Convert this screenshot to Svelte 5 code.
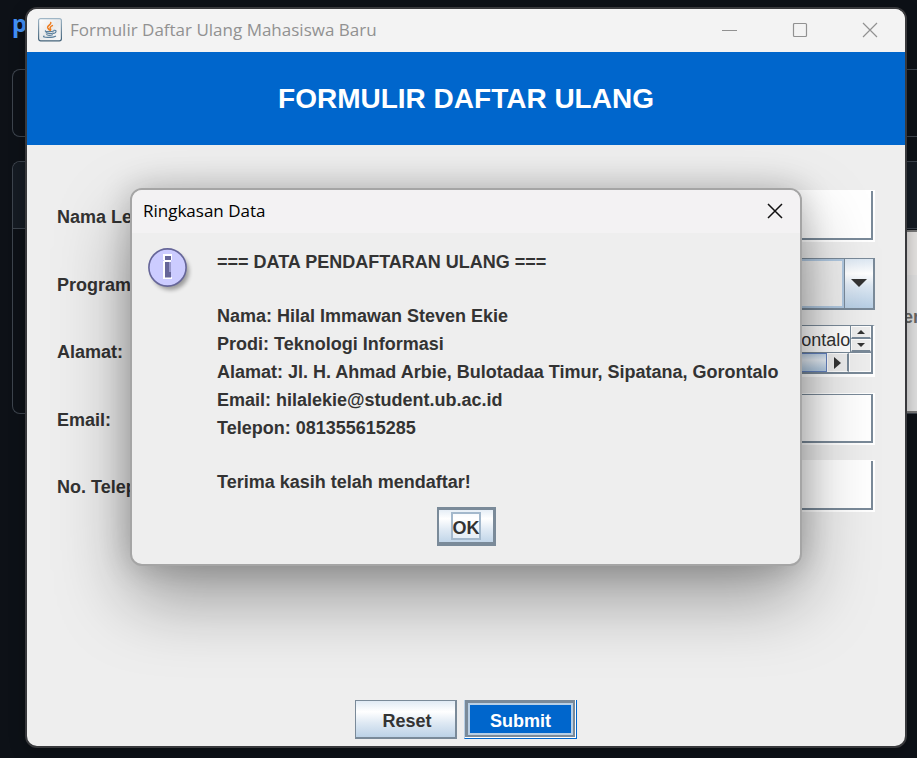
<script>
  import { onMount } from 'svelte';

  let nama = $state('Hilal Immawan Steven Ekie');
  let prodi = $state('Teknologi Informasi');
  let alamat = $state('Jl. H. Ahmad Arbie, Bulotadaa Timur, Sipatana, Gorontalo');
  let email = $state('hilalekie@student.ub.ac.id');
  let telepon = $state('081355615285');
  let area;

  onMount(() => {
    area.scrollLeft = area.scrollWidth;
  });
</script>

<div class="desktop">
  <div class="page" aria-hidden="true">
    <div class="brand">p</div>
    <div class="card"></div>
    <div class="panel"><div class="panel-head"><span></span></div></div>
  </div>

  <div class="side" aria-hidden="true"><div class="side-head"></div><p>er</p></div>

  <main class="window">
    <div class="titlebar">
      <svg class="java" viewBox="0 0 24 24" width="24" height="24" aria-hidden="true">
        <defs>
          <linearGradient id="jb" x1="0" y1="0" x2="0" y2="1">
            <stop offset="0" stop-color="#9fb6c6" /><stop offset="1" stop-color="#44637a" />
          </linearGradient>
          <linearGradient id="jf" x1="0" y1="0" x2="1" y2="1">
            <stop offset="0" stop-color="#ffffff" /><stop offset=".5" stop-color="#e9eaeb" /><stop offset="1" stop-color="#fafafa" />
          </linearGradient>
        </defs>
        <rect x=".6" y=".6" width="22.8" height="22.2" rx="2" fill="url(#jf)" stroke="url(#jb)" stroke-width="1.2" />
        <g fill="none" stroke-linecap="round">
          <path d="M12.800 4.500c.6 2.200-3.500 2.800-3.200 4.900.2 1.200 1.600 1.700 1.700 2.600M14.400 7.600c-1.600.7-2.600 1.400-2.100 2.600.4.900.7 1.300.1 2" stroke="#ef7d1f" stroke-width="1.500" />
          <path d="M7.500 12.800c-1.500.9 6 1.200 8.200.1M8.100 14.800c1.500 1 5.300.9 7 .1M8.700 16.600c1.300.8 4.300.8 5.800.1M16 12.400c2.900-.7 2.700 2.300-.2 3.100M6 18.100c-3 1.500 8.800 1.900 11.600.1" stroke="#5a7f9c" stroke-width="1.100" />
        </g>
      </svg>
      <span class="caption">Formulir Daftar Ulang Mahasiswa Baru</span>
      <div class="controls">
        <button type="button" aria-label="Minimize">
          <svg width="16" height="16" viewBox="0 0 16 16"><path d="M0 8.500h15" /></svg>
        </button>
        <button type="button" aria-label="Maximize">
          <svg width="16" height="16" viewBox="0 0 16 16"><rect x="1.500" y="1.500" width="13" height="13" rx="1" /></svg>
        </button>
        <button type="button" aria-label="Close">
          <svg width="16" height="16" viewBox="0 0 16 16"><path d="M1 1l14 14M15 1L1 15" /></svg>
        </button>
      </div>
    </div>

    <header><h1>FORMULIR DAFTAR ULANG</h1></header>

    <form onsubmit={(e) => e.preventDefault()}>
      <div class="fields">
        <label for="nama">Nama Lengkap:</label>
        <input id="nama" class="box open" type="text" bind:value={nama} />

        <label for="prodi">Program Studi:</label>
        <div class="combo">
          <select id="prodi" bind:value={prodi}>
            <option>Teknologi Informasi</option>
          </select>
          <span class="drop" aria-hidden="true">
            <svg width="16" height="8" viewBox="0 0 16 8"><path d="M0 0h16L8 8z" /></svg>
          </span>
        </div>

        <label for="alamat">Alamat:</label>
        <div class="scroll">
          <div class="upper">
            <textarea id="alamat" rows="1" wrap="off" bind:this={area} bind:value={alamat}></textarea>
            <div class="vbar">
              <button type="button" aria-label="Up"><svg width="8" height="4" viewBox="0 0 8 4"><path d="M0 4h8L4 0z" /></svg></button>
              <button type="button" aria-label="Down"><svg width="8" height="4" viewBox="0 0 8 4"><path d="M0 0h8L4 4z" /></svg></button>
            </div>
          </div>
          <div class="hbar">
            <div class="thumb"></div>
            <button type="button" aria-label="Right"><svg width="7" height="12" viewBox="0 0 7 12"><path d="M0 0v12l7-6z" /></svg></button>
            <div class="corner"></div>
          </div>
        </div>

        <label for="email">Email:</label>
        <input id="email" class="box" type="text" bind:value={email} />

        <label for="telepon">No. Telepon:</label>
        <input id="telepon" class="box open" type="text" bind:value={telepon} />
      </div>

      <div class="actions">
        <button type="reset" class="metal reset">Reset</button>
        <button type="submit" class="submit">Submit</button>
      </div>
    </form>
  </main>

  <div class="dialog" role="dialog" aria-labelledby="dlg-title">
    <div class="dlg-bar">
      <span id="dlg-title">Ringkasan Data</span>
      <button type="button" aria-label="Close">
        <svg width="16" height="16" viewBox="0 0 16 16"><path d="M1 1l14 14M15 1L1 15" /></svg>
      </button>
    </div>
    <div class="dlg-body">
      <svg class="info" width="46" height="48" viewBox="0 0 46 48" aria-hidden="true">
        <defs><filter id="soft"><feGaussianBlur stdDeviation="2" /></filter></defs>
        <circle cx="22.500" cy="23.500" r="18.500" fill="#000" opacity=".35" filter="url(#soft)" />
        <circle cx="19.500" cy="19.500" r="18.600" fill="#ccccff" stroke="#666699" stroke-width="1.600" />
        <path d="M15 6h9v6h-1v17h1v2h-9V13h1v-1h-1z" fill="#fff" />
        <path d="M17 8h6v4h-6zM17 14h6v15.500h-6z" fill="#666699" />
        <path d="M21 14h2v10h-2z" fill="#9999cc" />
      </svg>
      <div class="message">
        <p>=== DATA PENDAFTARAN ULANG ===</p>
        <p class="gap">Nama: {nama}</p>
        <p>Prodi: {prodi}</p>
        <p>Alamat: {alamat}</p>
        <p>Email: {email}</p>
        <p>Telepon: {telepon}</p>
        <p class="gap">Terima kasih telah mendaftar!</p>
      </div>
    </div>
    <div class="dlg-foot">
      <button type="button" class="metal ok"><span>OK</span></button>
    </div>
  </div>
</div>

<style>
  :global(body) { background: #0d1117; }
  .desktop {
    position: relative;
    height: 100vh;
    min-height: 600px;
    overflow: hidden;
    background: #0d1117;
    font: 18px/28px "Liberation Sans", Arial, sans-serif;
    color: #333;
  }
  .desktop * { box-sizing: border-box; }
  button, input, select, textarea { font: inherit; color: inherit; margin: 0; padding: 0; border: 0; border-radius: 0; }
  button { background: none; }
  p, h1 { margin: 0; }

  .page { padding: 8px 0 0 12px; }
  .brand { height: 61px; font: bold 24px/30px "Noto Sans", sans-serif; color: #4493f8; }
  .card { height: 68px; border: 1px solid #3d444d; border-right: 0; border-radius: 8px 0 0 8px; }
  .panel { height: 253px; margin-top: 24px; border: 1px solid #3d444d; border-right: 0; border-radius: 8px 0 0 8px; overflow: hidden; }
  .panel-head { height: 67px; padding: 28px 12px; background: #151b23; border-bottom: 1px solid #3d444d; }
  .panel-head span { display: block; width: 12px; height: 12px; border: 2px solid #4a5a6a; border-radius: 50%; }

  .side {
    position: absolute;
    top: 230px;
    right: 0;
    width: 14px;
    height: 183px;
    background: #dedede;
    border-top: 2px solid #777;
    border-bottom: 2px solid #777;
  }
  .side-head { height: 43px; background: #e4e2e0; }
  .side p { margin-top: 28px; font-weight: bold; color: #666; }

  .window {
    position: absolute;
    top: 7px;
    left: 25px;
    right: 10px;
    bottom: 10px;
    display: flex;
    flex-direction: column;
    border: 2px solid #38393c;
    border-radius: 12px;
    background: #eee;
    overflow: hidden;
    box-shadow: 0 4px 16px #0004;
  }
  .titlebar { display: flex; align-items: center; height: 43px; flex: none; padding: 0 0 2px 11px; background: #f3f3f3; color: #919191; }
  .caption { margin-left: 8px; font: 17px/24px "Open Sans", "Noto Sans", sans-serif; }
  .controls { display: flex; margin-left: auto; }
  .controls button { display: grid; place-items: center; width: 70px; height: 40px; }
  .controls svg { fill: none; stroke: #919191; stroke-width: 1.2; }

  header { height: 93px; flex: none; display: grid; place-items: center; background: #0066cc; }
  h1 { font-size: 28px; line-height: 32px; color: #fff; }

  form { flex: 1; display: flex; flex-direction: column; padding: 45px 30px 7px; }
  .fields { display: grid; grid-template-columns: 1fr 1fr; grid-auto-rows: 52px; align-content: space-between; height: 322px; }
  label { align-self: center; padding-top: 2px; font-weight: bold; }
  .box {
    width: 100%;
    min-width: 0;
    padding: 0 5px;
    background: #fff;
    border: 2px solid #fff;
    border-top-width: 1px;
    box-shadow: inset -2px -2px #7a8a99, inset 1px 1px #7a8a99;
  }
  .open { box-shadow: inset -2px -2px #7a8a99; }
  .combo { display: flex; min-width: 0; border: 1px solid #7a8a99; border-right-width: 2px; border-bottom-width: 2px; }
  select { flex: 1; min-width: 0; appearance: none; padding-left: 6px; background: #eee; border: 2px solid #b0c8e0; outline: 0; }
  .drop { display: grid; place-items: center; width: 29px; border-left: 1px solid #7a8a99; background: linear-gradient(#dde8f3, #fff 30%, #dde8f3 55%, #b8cfe5); }
  .drop path, .scroll path { fill: #333; }

  .scroll { display: flex; flex-direction: column; min-width: 0; border: 1px solid #7a8a99; border-right: 2px solid #fff; border-bottom: 3px solid #fff; box-shadow: inset -2px -2px #7a8a99; padding: 0 2px 2px 0; background: #eee; }
  .upper { display: flex; height: 26px; }
  textarea { flex: 1; min-width: 0; height: 26px; resize: none; overflow: hidden; background: #fff; line-height: 28px; }
  .vbar { display: flex; flex-direction: column; width: 21px; border-left: 1px solid #7a8a99; }
  .vbar button { flex: 1; display: grid; place-items: center; border: 1px solid #fff; border-bottom: 2px solid #7a8a99; }
  .hbar { flex: 1; display: flex; border-top: 1px solid #7a8a99; }
  .thumb { flex: 1; border: 1px solid #6382bf; border-left: 0; background: linear-gradient(#c3d6ea, #e8eff7 35%, #b8cfe5 90%); }
  .hbar button { display: grid; place-items: center; width: 22px; border: 1px solid #fff; border-right: 2px solid #7a8a99; }
  .corner { width: 22px; border: 1px solid #fff; }

  .actions { display: flex; justify-content: center; gap: 7px; margin-top: auto; }
  .metal { background: linear-gradient(#dde8f3, #fff 30%, #dde8f3 60%, #b8cfe5) border-box; border: 2px solid #7a8a99; font-weight: bold; }
  .reset { width: 102px; height: 39px; padding: 3px 0 0 3px; border-width: 1px 2px 2px 1px; }
  .submit {
    width: 113px;
    height: 39px;
    padding-top: 3px;
    font-weight: bold;
    color: #fff;
    background: #0066cc;
    border: 1px solid #0066cc;
    border-top: 0;
    border-left-color: #b8cfe5;
    box-shadow: inset -1px -1px #fff, inset 0 0 0 3px #7a8a99, inset 0 0 0 5px #b8cfe5;
  }

  .dialog {
    position: absolute;
    top: 188px;
    left: 130px;
    right: 115px;
    border: 2px solid #a5a5a5;
    border-radius: 12px;
    background: #eee;
    background-clip: padding-box;
    box-shadow: 0 32px 72px rgba(0, 0, 0, 0.36), 0 0 32px rgba(0, 0, 0, 0.2);
  }
  .dlg-bar { display: flex; align-items: center; justify-content: space-between; height: 43px; padding: 0 0 2px 11px; background: #f3f2f3; border-radius: 10px 10px 0 0; font: 17px/24px "Open Sans", "Noto Sans", sans-serif; color: #000; }
  .dlg-bar button { display: grid; place-items: center; width: 50px; height: 40px; }
  .dlg-bar path { fill: none; stroke: #111; stroke-width: 1.5; }
  .dlg-body { display: flex; align-items: flex-start; gap: 23px; padding: 15px 0 0 16px; }
  .info { flex: none; }
  .message { font-weight: bold; line-height: 28px; white-space: nowrap; }
  .message .gap { margin-top: 26px; }
  .dlg-foot { display: flex; justify-content: center; padding: 11px 0 18px; }
  .ok { display: grid; place-items: center; width: 59px; height: 39px; border-width: 3px 3px 4px 2px; }
  .ok span { height: 28px; width: 30px; border: 2px solid #a3b8cc; line-height: 28px; background: #ffffff80; }
</style>
